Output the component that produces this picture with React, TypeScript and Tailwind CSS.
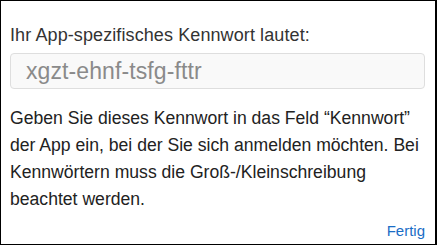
import React from 'react';

export default function App() {
  return (
    <div className="w-[437px] h-[245px] bg-white border border-black border-r-2 overflow-hidden font-['Liberation_Sans',Arial,sans-serif] text-[#222]">
      <div className="flex flex-col h-full pl-[9px] pr-[10px] pt-[24px]">
        <p className="text-[18px] leading-[20px] tracking-[0.1px] text-[#333]">Ihr App-spezifisches Kennwort lautet:</p>
        <div className="mt-[8px] h-[36px] rounded-[4px] border border-[#dedede] bg-[#f9f9f9] flex items-center pl-[15px]">
          <span className="text-[23px] text-[#8a8a8a] tracking-[0.1px]">xgzt-ehnf-tsfg-fttr</span>
        </div>
        <p className="mt-[16px] text-[17.6px] leading-[27px] text-[#222] whitespace-nowrap">
          Geben Sie dieses Kennwort in das Feld “Kennwort”
          <br />
          der App ein, bei der Sie sich anmelden möchten. Bei
          <br />
          Kennwörtern muss die Groß-/Kleinschreibung
          <br />
          beachtet werden.
        </p>
        <div className="mt-auto mb-[5px] flex justify-end">
          <button className="text-[15px] leading-[17px] text-[#1a6dc6]">Fertig</button>
        </div>
      </div>
    </div>
  );
}
